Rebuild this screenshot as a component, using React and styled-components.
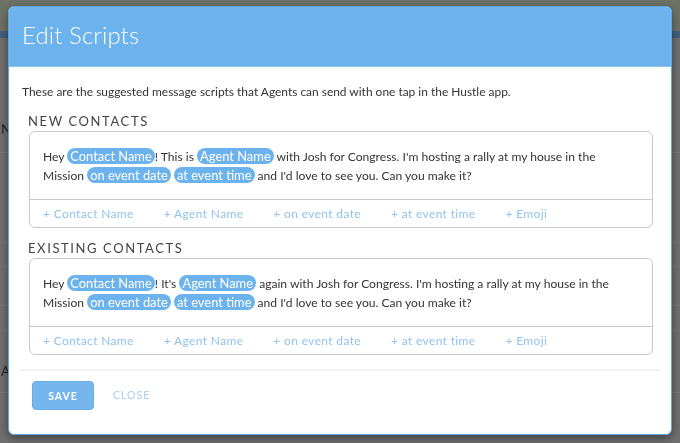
import styled, { createGlobalStyle } from 'styled-components';

const GlobalStyle = createGlobalStyle`
  html, body {
    margin: 0;
    padding: 0;
    width: 680px;
    height: 443px;
    overflow: hidden;
    background: #6e6e6e;
  }
  * {
    box-sizing: border-box;
  }
`;

const Page = styled.div`
  width: 680px;
  height: 443px;
  display: flex;
  flex-direction: column;
  background: #707070;
  font-family: Lato, 'Liberation Sans', sans-serif;
`;

const PageTop = styled.div`
  height: 31px;
  background: #6f7367;
`;

const PageNav = styled.div`
  height: 7px;
  background: #46617e;
`;

const PageRow = styled.div`
  height: ${(p) => p.$h}px;
  border-bottom: 1px solid #7a7a7a;
  color: #262626;
  font-size: 13px;
  line-height: 16px;
  display: flex;
  align-items: flex-end;
  padding: 0 0 ${(p) => p.$pb || 0}px 1px;
`;

const Modal = styled.div`
  position: fixed;
  left: 8px;
  top: 6px;
  width: 664px;
  height: 429px;
  background: #fff;
  border: 1px solid #5ea6e6;
  border-radius: 6px;
  overflow: hidden;
  display: flex;
  flex-direction: column;
  box-shadow: 0 3px 10px rgba(0, 0, 0, 0.45);
  font-family: Lato, 'Liberation Sans', sans-serif;
`;

const Header = styled.div`
  height: 60px;
  flex: none;
  background: #6cb2ec;
  border-bottom: 1px solid #8fc4f0;
  display: flex;
  align-items: center;
  padding: 0 13px 4px;
`;

const Title = styled.h1`
  margin: 0;
  color: #fff;
  font-size: 24px;
  font-weight: 300;
  letter-spacing: 0.1px;
`;

const Body = styled.div`
  padding: 15px 18px 0 13px;
`;

const Intro = styled.p`
  margin: 0;
  font-size: 11.95px;
  line-height: 20px;
  color: #333;
`;

const SectionLabel = styled.div`
  margin: ${(p) => (p.$first ? '11px' : '12px')} 0 2px 6px;
  font-size: 13px;
  line-height: 16px;
  letter-spacing: 1.6px;
  color: #444;
  text-transform: uppercase;
`;

const ScriptBox = styled.div`
  margin-left: 7px;
  border: 1px solid #c6c9cd;
  border-radius: 6px;
  display: flex;
  flex-direction: column;
`;

const ScriptText = styled.div`
  padding: 15px 13px 14px;
  font-size: 12.1px;
  line-height: 19px;
  color: #333;
  border-bottom: 1px solid #c6c9cd;
`;

const Chip = styled.span`
  display: inline-block;
  background: #6cb2ec;
  color: #fff;
  border-radius: 8px;
  padding: 0 3px;
  font-size: 12.9px;
  line-height: 16px;
`;

const InsertBar = styled.div`
  height: 27px;
  display: flex;
  align-items: center;
  gap: 30px;
  padding-left: 13px;
`;

const InsertLink = styled.span`
  font-size: 12px;
  color: #90c3ef;
  letter-spacing: 0.35px;
`;

const Footer = styled.div`
  margin: 14px 11px 0;
  border-top: 2px solid #f2f2f2;
  padding: 10px 12px;
  display: flex;
  align-items: center;
  gap: 19px;
`;

const SaveButton = styled.button`
  width: 62px;
  height: 29px;
  background: #76b6ee;
  border: 1px solid #68ace6;
  border-radius: 4px;
  color: #fff;
  font-family: Lato, 'Liberation Sans', sans-serif;
  font-size: 10.5px;
  font-weight: 700;
  letter-spacing: 1px;
  padding: 0;
`;

const CloseLink = styled.span`
  font-size: 10.5px;
  letter-spacing: 1px;
  color: #a9cff3;
  margin-top: -2px;
`;

const inserts = ['+ Contact Name', '+ Agent Name', '+ on event date', '+ at event time', '+ Emoji'];

function Script({ verb, after }) {
  return (
    <ScriptBox>
      <ScriptText>
        Hey <Chip>Contact Name</Chip>! {verb} <Chip>Agent Name</Chip> {after} with Josh for Congress. I'm
        hosting a rally at my house in the Mission <Chip>on event date</Chip> <Chip>at event time</Chip> and
        I'd love to see you. Can you make it?
      </ScriptText>
      <InsertBar>
        {inserts.map((t) => (
          <InsertLink key={t}>{t}</InsertLink>
        ))}
      </InsertBar>
    </ScriptBox>
  );
}

export default function App() {
  return (
    <>
      <GlobalStyle />
      <Page>
        <PageTop />
        <PageNav />
        <PageRow $h={115} $pb={15}>N</PageRow>
        <PageRow $h={90} />
        <PageRow $h={24} />
        <PageRow $h={39} />
        <PageRow $h={25} />
        <PageRow $h={62} $pb={13}>A</PageRow>
      </Page>
      <Modal>
        <Header>
          <Title>Edit Scripts</Title>
        </Header>
        <Body>
          <Intro>
            These are the suggested message scripts that Agents can send with one tap in the Hustle app.
          </Intro>
          <SectionLabel $first>New Contacts</SectionLabel>
          <Script verb="This is" after="" />
          <SectionLabel>Existing Contacts</SectionLabel>
          <Script verb="It's" after="again" />
        </Body>
        <Footer>
          <SaveButton>SAVE</SaveButton>
          <CloseLink>CLOSE</CloseLink>
        </Footer>
      </Modal>
    </>
  );
}
